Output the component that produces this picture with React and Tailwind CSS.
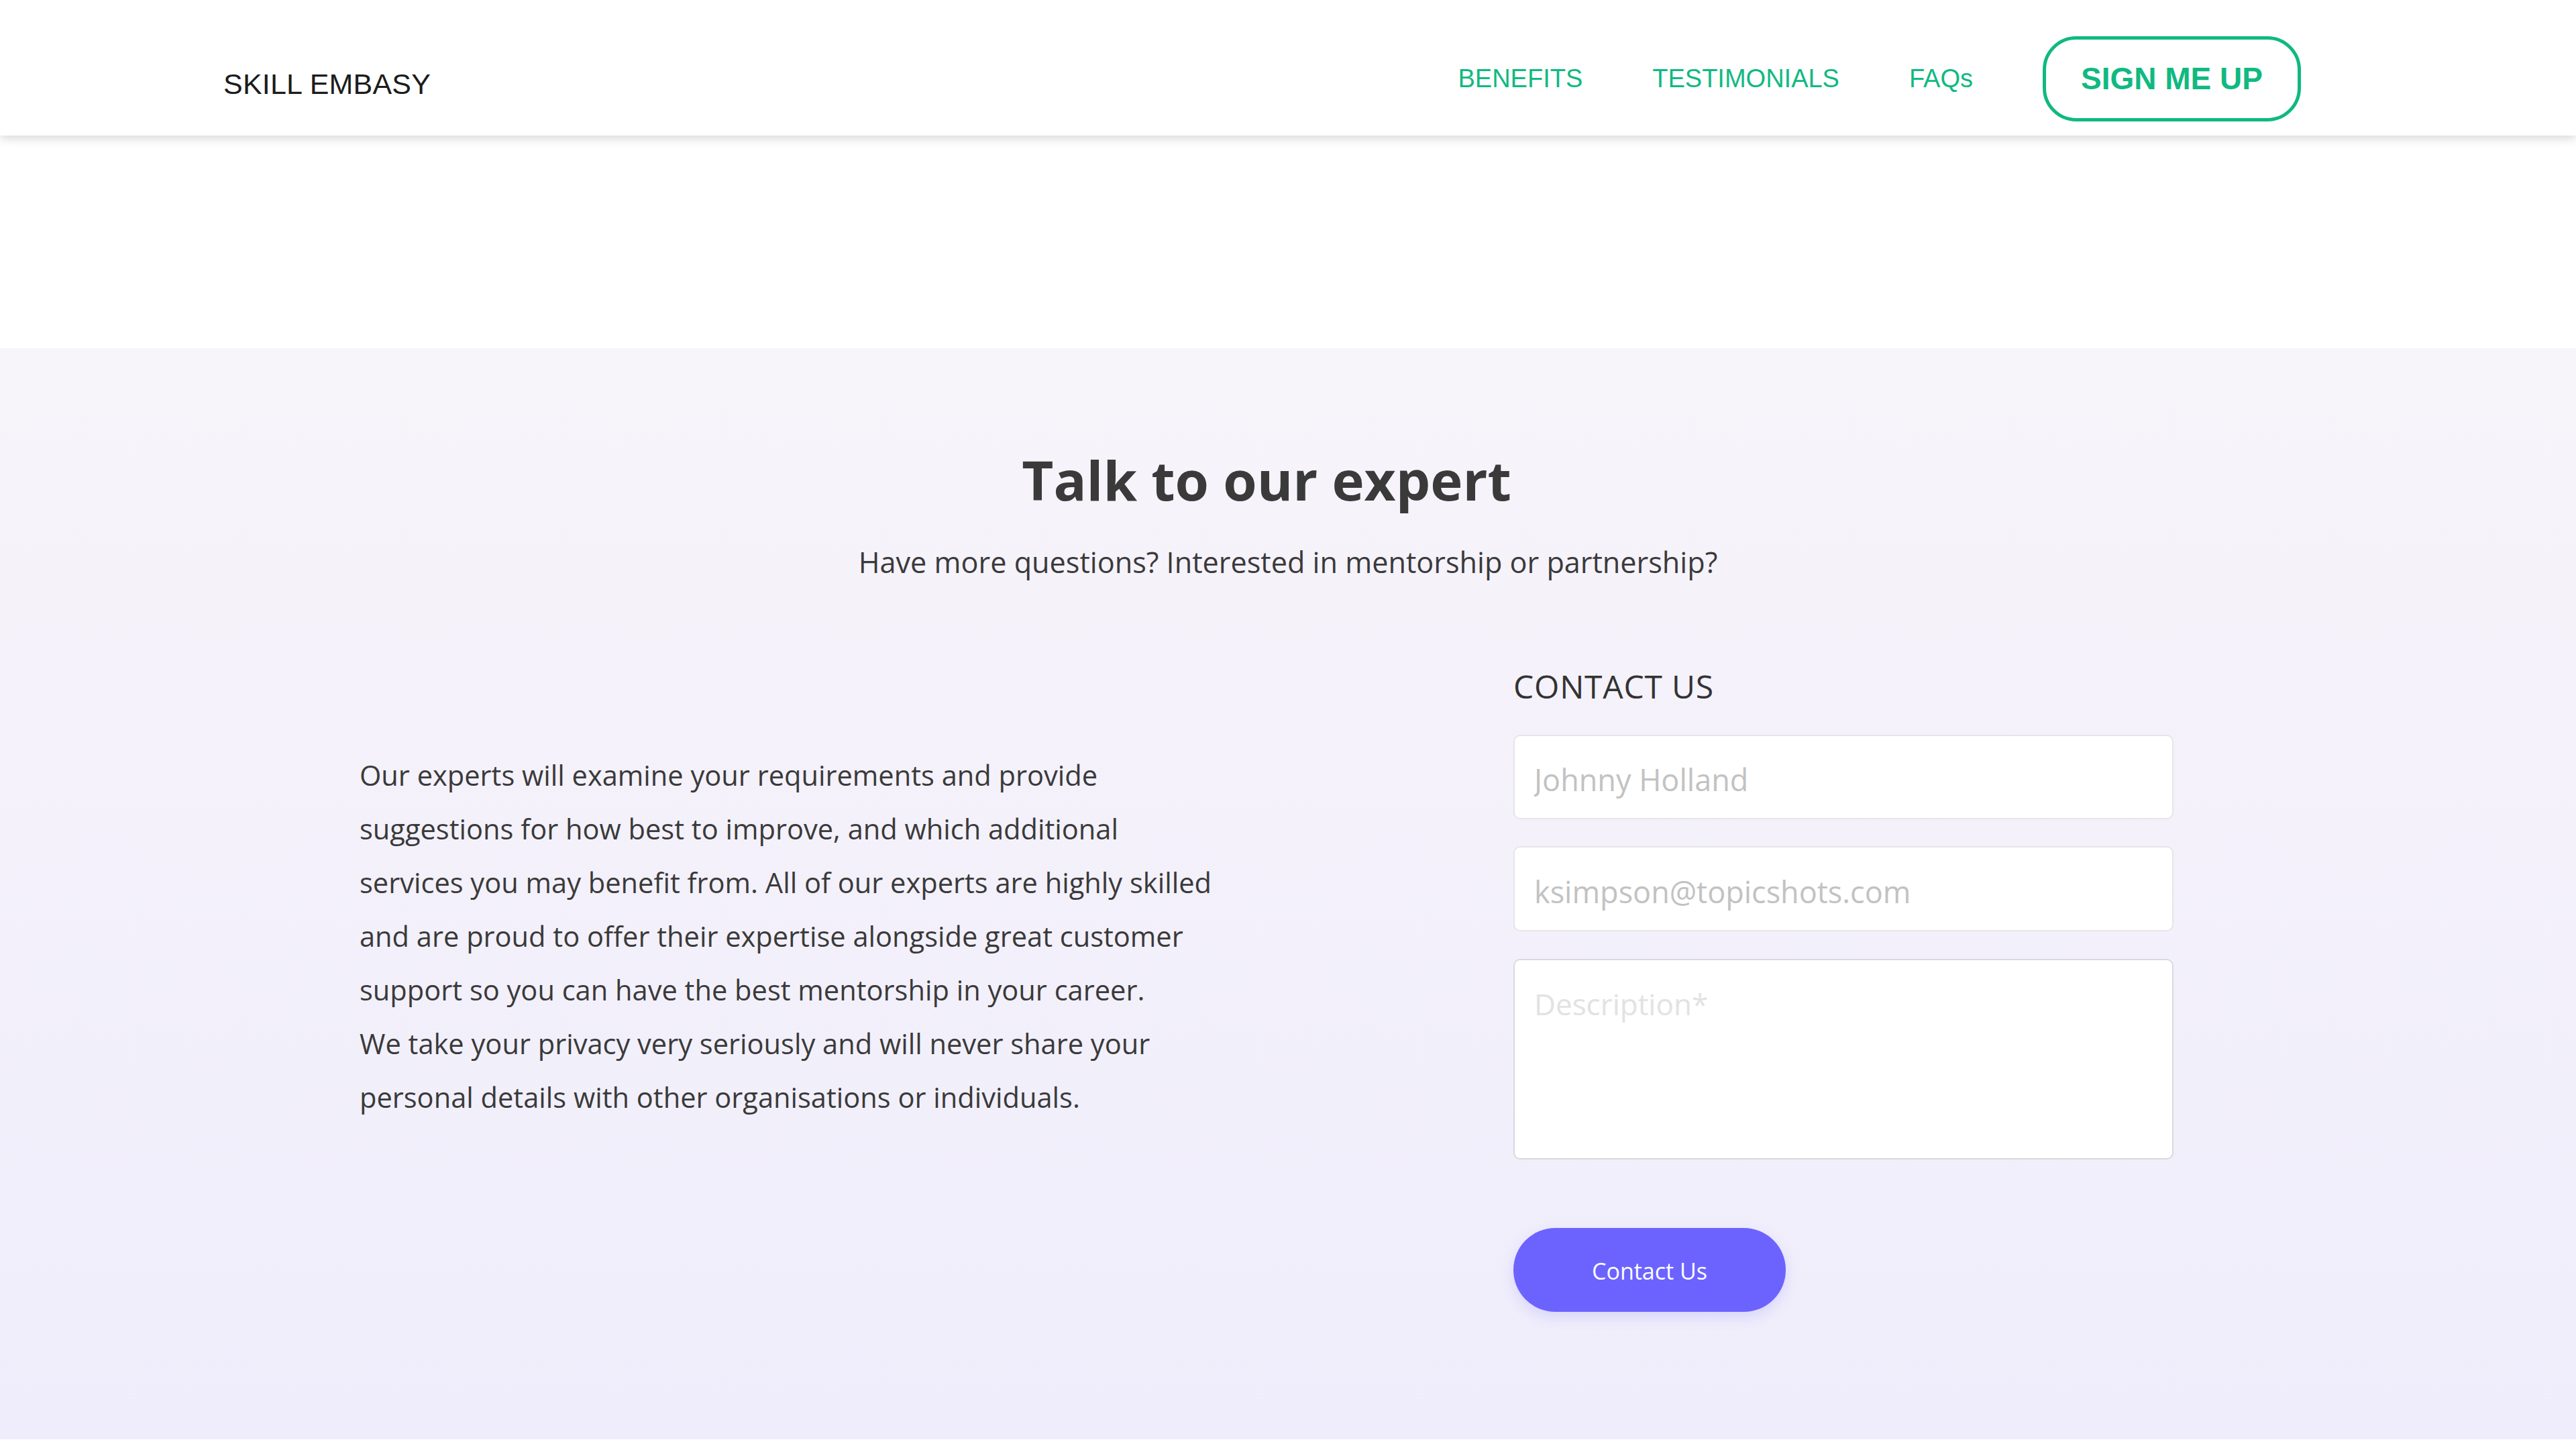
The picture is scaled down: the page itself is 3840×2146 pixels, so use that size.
import React from "react";

const lines = [
  "Our experts will examine your requirements and provide",
  "suggestions for how best to improve, and which additional",
  "services you may benefit from. All of our experts are highly skilled",
  "and are proud to offer their expertise alongside great customer",
  "support so you can have the best mentorship in your career.",
  "We take your privacy very seriously and will never share your",
  "personal details with other organisations or individuals.",
];

export default function App() {
  return (
    <div className="w-full min-h-screen bg-white font-['Open_Sans','Noto_Sans',sans-serif]">
      {/* Header */}
      <header className="relative z-10 h-[202px] bg-white shadow-[0_4px_14px_rgba(0,0,0,0.16)] flex items-center justify-between pl-[333px] pr-[410px] pt-[32px] font-['Liberation_Sans',Arial,sans-serif]">
        <div className="mt-[16px] text-[43px] text-[#1c1c1c] tracking-[0.2px]">SKILL EMBASY</div>
        <nav className="flex items-center gap-[104px]">
          <a className="text-[38px] text-[#10b981]">BENEFITS</a>
          <a className="text-[38px] text-[#10b981]">TESTIMONIALS</a>
          <a className="text-[38px] text-[#10b981]">FAQs</a>
          <button className="w-[385px] h-[127px] rounded-[50px] border-[5px] border-[#10b981] text-[46px] font-bold text-[#10b981]">
            SIGN ME UP
          </button>
        </nav>
      </header>

      {/* Empty hero strip */}
      <div className="h-[317px] bg-white" />

      {/* Contact section */}
      <section className="bg-gradient-to-b from-[#f7f4fa] to-[#efedfb] pt-[147px] pb-[190px]">
        <div className="ml-[536px] w-[2704px]">
          <h2 className="text-center text-[81.5px] leading-[1.2] font-bold text-[#3a3a3a]">Talk to our expert</h2>
        </div>
        <p className="mt-[42px] text-center text-[43.2px] leading-[1.5] text-[#3a3a3a]">
          Have more questions? Interested in mentorship or partnership?
        </p>

        <div className="ml-[536px] w-[2704px] grid grid-cols-[1720px_984px] mt-[116px]">
          <div className="pt-[128px] text-[41.6px] leading-[80px] text-[#3a3a3a]">
            {lines.map((l) => (
              <div key={l} className="whitespace-nowrap">{l}</div>
            ))}
          </div>

          <form className="flex flex-col" onSubmit={(e) => e.preventDefault()}>
            <div className="text-[48px] leading-[72px] text-[#333] tracking-[0.8px]">CONTACT US</div>
            <input
              placeholder="Johnny Holland"
              className="mt-[36px] h-[126px] w-full rounded-[10px] border-2 border-[#e6e6e9] bg-white px-[29px] pt-[8px] text-[45px] text-[#333] placeholder:text-[#c2c2c2] outline-none"
            />
            <input
              placeholder="ksimpson@topicshots.com"
              className="mt-[40px] h-[127px] w-full rounded-[10px] border-2 border-[#e6e6e9] bg-white px-[29px] pt-[8px] text-[45px] text-[#333] placeholder:text-[#c2c2c2] outline-none"
            />
            <textarea
              placeholder="Description*"
              className="mt-[41px] h-[299px] w-full resize-none rounded-[10px] border-2 border-[#d9d9de] bg-white px-[29px] pt-[32px] text-[44px] leading-[1.5] text-[#333] placeholder:text-[#e2e2e4] outline-none"
            />
            <button className="mt-[102px] w-[406px] h-[125px] rounded-full bg-[#6c63ff] pt-[4px] text-white text-[34px] shadow-[0_8px_20px_rgba(108,99,255,0.18)]">
              Contact Us
            </button>
          </form>
        </div>
      </section>
    </div>
  );
}
